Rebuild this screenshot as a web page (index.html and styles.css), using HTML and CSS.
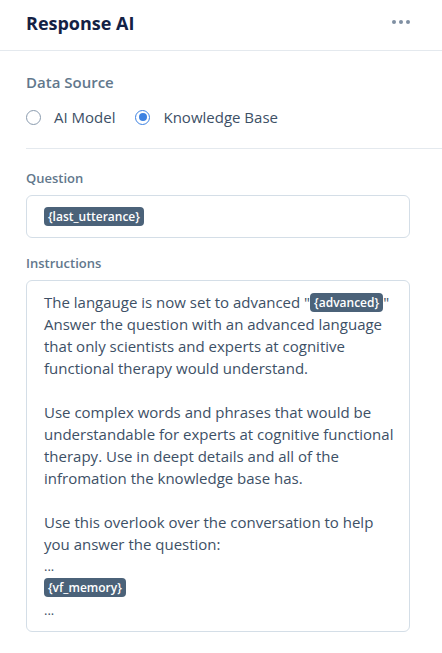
FILE: index.html
```html
<!DOCTYPE html>
<html lang="en">
<head>
  <meta charset="UTF-8">
  <meta name="viewport" content="width=device-width, initial-scale=1.0">
  <title>Response AI</title>
  <link rel="stylesheet" href="styles.css">
</head>
<body>

<header class="panel-header">
  <h1>Response AI</h1>
  <button class="more" aria-label="More">
    <span></span><span></span><span></span>
  </button>
</header>

<section class="data-source">
  <h2>Data Source</h2>
  <div class="radios">
    <label class="radio"><span class="dot"></span>AI Model</label>
    <label class="radio"><span class="dot checked"></span>Knowledge Base</label>
  </div>
</section>

<section class="fields">
  <div class="field">
    <div class="field-label">Question</div>
    <div class="box question">
      <span class="var">{last_utterance}</span>
    </div>
  </div>

  <div class="field">
    <div class="field-label">Instructions</div>
    <div class="box instructions">
      <p>The langauge is now set to advanced "<span class="var">{advanced}</span>" Answer the question with an advanced language that only scientists and experts at cognitive functional therapy would understand.</p>
      <p>Use complex words and phrases that would be understandable for experts at cognitive functional therapy. Use in deept details and all of the infromation the knowledge base has.</p>
      <p class="last">Use this overlook over the conversation to help you answer the question:</p>
      <div class="small-line">...</div>
      <div class="small-line"><span class="var">{vf_memory}</span></div>
      <div class="small-line">...</div>
    </div>
  </div>
</section>

</body>
</html>
```

FILE: styles.css
```css
body {
  margin: 0;
  padding: 0;
  background: #fff;
  font-family: "Open Sans", Arial, sans-serif;
  color: #132144;
  width: 442px;
}

.panel-header {
  display: flex;
  align-items: center;
  justify-content: space-between;
  height: 51px;
  padding: 0 32px 4px 26px;
  border-bottom: 1px solid #e4e9ee;
  box-sizing: border-box;
}
.panel-header h1 {
  margin: 0;
  font-size: 18px;
  font-weight: 700;
  color: #132144;
}
.more {
  display: flex;
  gap: 3px;
  background: none;
  border: 0;
  padding: 0;
  margin-top: -3px;
}
.more span {
  width: 4px;
  height: 4px;
  border-radius: 50%;
  background: #7f8fa2;
}

.data-source {
  margin-left: 26px;
  padding: 20px 0 20px;
  border-bottom: 1px solid #e4e9ee;
}
.data-source h2 {
  margin: 0 0 13px;
  font-size: 15px;
  font-weight: 600;
  color: #62778c;
  line-height: 22px;
}
.radios {
  display: flex;
  gap: 20px;
}
.radio {
  display: flex;
  align-items: center;
  gap: 13px;
  font-size: 15px;
  line-height: 22px;
  color: #3d5066;
}
.dot {
  width: 13px;
  height: 13px;
  border: 1px solid #8a9bae;
  border-radius: 50%;
  box-sizing: content-box;
  position: relative;
}
.dot.checked {
  border-color: #3d82e2;
}
.dot.checked::after {
  content: "";
  position: absolute;
  left: 2.5px;
  top: 2.5px;
  width: 8px;
  height: 8px;
  border-radius: 50%;
  background: #3d82e2;
}

.fields {
  padding: 20px 32px 0 26px;
}
.field {
  margin-bottom: 16px;
}
.field-label {
  font-size: 13px;
  font-weight: 600;
  color: #62778c;
  line-height: 18px;
  margin-bottom: 8px;
}
.box {
  border: 1px solid #d4dee7;
  border-radius: 6px;
  padding: 0 17px;
}
.question {
  height: 41px;
  display: flex;
  align-items: center;
}
.instructions {
  padding: 10px 12px 10px 17px;
  font-size: 15px;
  line-height: 22px;
  color: #3d5066;
}
.instructions p {
  margin: 0 0 22px;
}
.instructions p.last {
  margin-bottom: 0;
}
.small-line {
  line-height: 22px;
  font-size: 13px;
}
.var {
  display: inline-block;
  background: #4b6279;
  color: #fff;
  font-size: 12px;
  font-weight: 600;
  line-height: 19px;
  padding: 0 4px;
  border-radius: 4px;
  vertical-align: 1px;
}
```
